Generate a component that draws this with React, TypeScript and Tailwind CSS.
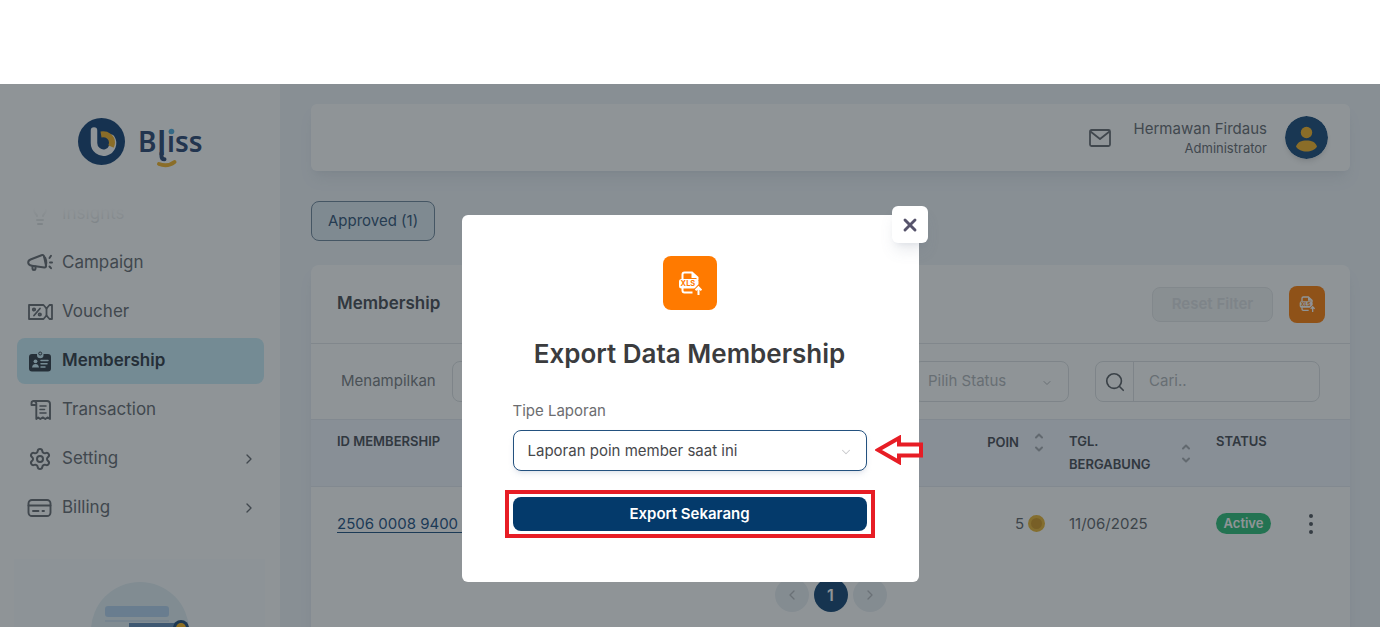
import React from "react";
import { ChevronDown, ChevronLeft, ChevronRight, ChevronUp, Lightbulb, Search, Settings, X } from "lucide-react";

type IconProps = { className?: string };

function CampaignIcon({ className }: IconProps) {
    return (
        <svg className={className} viewBox="0 0 26 24" fill="none" stroke="currentColor" strokeWidth="2" strokeLinecap="round" strokeLinejoin="round">
            <path d="M3.5 8.5 14.500 4.200c1.300-.5 2.200 0 2.500 1.200L19 14.500c.2 1.300-.5 2.100-1.700 1.900L5 14.800C2.500 14.500 1.200 13.500 1.200 11.600c0-1.600.8-2.500 2.300-3.100Z" />
            <path d="M17 5.500c2 1.500 3 6 1.800 9.500" />
            <path d="M5.500 15v2.700c0 1.600 3 1.600 3 0v-2.300" />
            <path d="m22.500 7 1.500-2.200M23 11.500h2M22.500 15.500l1.500 1.700" />
        </svg>
    );
}

function VoucherIcon({ className }: IconProps) {
    return (
        <svg className={className} viewBox="0 0 26 24" fill="none" stroke="currentColor" strokeWidth="1.8" strokeLinecap="round" strokeLinejoin="round">
            <path d="M2 5h14.500l3 3.500L22.500 5H25v14h-2.500l-3-3.500-3 3.500H2Z" />
            <path d="M19.500 8.500v7" />
            <path d="m7 15.500 6-7" />
            <circle cx="7" cy="9.500" r="1.200" />
            <circle cx="12.800" cy="14.500" r="1.200" />
        </svg>
    );
}

function MembershipIcon({ className }: IconProps) {
    return (
        <svg className={className} viewBox="0 0 26 24" fill="none">
            <path d="M10 5H5a3 3 0 0 0-3 3v11.500a3 3 0 0 0 3 3h16a3 3 0 0 0 3-3V8a3 3 0 0 0-3-3h-4.500v1a3.200 3.200 0 0 1-6.500 0Z" fill="currentColor" />
            <circle cx="13.200" cy="4.500" r="1.500" stroke="currentColor" strokeWidth="1" />
            <circle cx="8.500" cy="12.300" r="1.900" fill="#cdeffa" />
            <path d="M5 18.500c.3-2.600 1.700-3.600 3.500-3.600s3.200 1 3.500 3.600Z" fill="#cdeffa" />
            <path d="M14 11.500h7M14 14.700h6M14 18h4" stroke="#cdeffa" strokeWidth="1.500" strokeLinecap="round" />
        </svg>
    );
}

function TransactionIcon({ className }: IconProps) {
    return (
        <svg className={className} viewBox="0 0 26 24" fill="none" stroke="currentColor" strokeWidth="1.900" strokeLinecap="round" strokeLinejoin="round">
            <path d="M6 3h14a3 3 0 0 1 3 3v15l-2.500-1.600L18.300 21l-2.500-1.600L13.300 21l-2.100-1.600L9.300 21V5.500C9.300 4 8 3 6.700 3S4.500 4 4.500 5.200V7h4.800" />
            <path d="M13 8h6M13 11.500h4.500M13 15h6" strokeWidth="1.600" />
        </svg>
    );
}

function SettingIcon({ className }: IconProps) {
    return <Settings className={className} strokeWidth={2} />;
}

function BillingIcon({ className }: IconProps) {
    return (
        <svg className={className} viewBox="0 0 26 24" fill="none" stroke="currentColor" strokeWidth="1.900" strokeLinecap="round">
            <rect x="1.500" y="4" width="22" height="16" rx="3.500" />
            <path d="M1.500 9.500h22M6 15h5.500M15.500 15h1.500" />
        </svg>
    );
}

function InsightIcon({ className }: IconProps) {
    return <Lightbulb className={className} strokeWidth={2} />;
}

function MailIcon({ className }: IconProps) {
    return (
        <svg className={className} viewBox="0 0 24 24" fill="none" stroke="currentColor" strokeWidth="1.800" strokeLinejoin="round">
            <rect x="2" y="4" width="20" height="16" rx="1.500" />
            <path d="m2.500 5.500 9.500 7.500 9.500-7.500" />
        </svg>
    );
}

function XlsIcon({ className }: IconProps) {
    return (
        <svg className={className} viewBox="0 0 24 24" fill="none">
            <path d="M4.500 8V3.500A2 2 0 0 1 6.500 1.500H14l5.500 5V9" stroke="white" strokeWidth="2" />
            <path d="M13.500 1.500V7H20Z" fill="white" />
            <rect x="1" y="8" width="19.500" height="9.500" rx="2.500" fill="white" />
            <text x="2.600" y="15.400" fontSize="7.500" fontWeight="700" fontFamily="Inter, sans-serif" fill="#ff7a00">XLS</text>
            <path d="M4.500 17v2.500a2 2 0 0 0 2 2h8" stroke="white" strokeWidth="2" />
            <path d="M20.500 24v-6.500M17.500 19.300l3-3.100 3 3.100" stroke="#ff7a00" strokeWidth="4" />
            <path d="M20.500 24v-6.500M17.500 19.300l3-3.100 3 3.100" stroke="white" strokeWidth="2" />
        </svg>
    );
}

function Logo() {
    return (
        <svg className="h-[52px] w-[130px]" viewBox="0 0 130 52">
            <circle cx="23.500" cy="23.500" r="23.500" fill="#0d3a70" />
            <path d="M16 12.500V25a9.500 9.500 0 1 0 17.500-5" fill="none" stroke="white" strokeWidth="6.500" strokeLinecap="round" />
            <path d="M23 16.500c6-1 11 2.500 11 8 0 1.500-.4 2.800-1 4" fill="none" stroke="#f5b120" strokeWidth="6" />
            <text fontFamily="'Noto Sans', sans-serif" fontWeight="600" fontSize="28" fill="#24406f">
                <tspan x="60" y="34">B</tspan>
                <tspan x="79" y="37" fontSize="33">l</tspan>
                <tspan x="89" y="34">iss</tspan>
            </text>
            <path d="M83.500 35v3c0 2.200 1 3.300 3 3.300" fill="none" stroke="#24406f" strokeWidth="4" strokeLinecap="round" />
            <circle cx="93.500" cy="13.500" r="2.800" fill="#4aa8dc" />
            <path d="M81 46c5 2 11 1.500 15.500-2" fill="none" stroke="#f5b120" strokeWidth="4" strokeLinecap="round" />
        </svg>
    );
}

const menu = [
    { id: 1, label: "Insights", Icon: InsightIcon },
    { id: 2, label: "Campaign", Icon: CampaignIcon },
    { id: 3, label: "Voucher", Icon: VoucherIcon },
    { id: 4, label: "Membership", Icon: MembershipIcon, active: true },
    { id: 5, label: "Transaction", Icon: TransactionIcon },
    { id: 6, label: "Setting", Icon: SettingIcon, nested: true },
    { id: 7, label: "Billing", Icon: BillingIcon, nested: true },
];

function Sidebar() {
    return (
        <aside className="w-[280px] shrink-0 overflow-hidden bg-white pt-[34px]">
            <div className="pl-[78px]">
                <Logo />
            </div>
            <nav className="relative mt-[21px] flex flex-col gap-[3px] pl-[17px] pr-4">
                {menu.map(({ id, label, Icon, active, nested }) => (
                    <a
                        key={id}
                        href="#"
                        className={`flex h-[46px] items-center rounded-lg pl-[10px] pr-[7px] text-[17px] ${
                            active ? "bg-[#c9ecf8] font-semibold text-[#2a3440]" : "text-[#62666d]"
                        }`}
                    >
                        <Icon className="h-6 w-[26px]" />
                        <span className="ml-[9px] flex-1">{label}</span>
                        {nested && <ChevronRight className="size-4" />}
                    </a>
                ))}
                <div className="absolute inset-x-0 top-0 h-12 bg-linear-to-b from-white from-35% to-white/60" />
            </nav>
            <div className="ml-[14px] mr-[15px] mt-7 bg-[#fafdff] pt-[23px]">
                <svg className="mx-auto block h-[98px] w-[98px]" viewBox="0 0 98 98">
                    <circle cx="49" cy="49" r="49" fill="#e2eef4" />
                    <rect x="14" y="24" width="64" height="11" rx="3" fill="#b3d1ee" />
                    <rect x="14" y="38" width="64" height="2" fill="#cfe0f0" />
                    <rect x="38" y="41" width="50" height="40" fill="#5c86b4" />
                    <circle cx="90" cy="46" r="8" fill="#1b4675" />
                    <circle cx="90" cy="46" r="5" fill="#ffb413" />
                </svg>
            </div>
        </aside>
    );
}

function Topbar() {
    return (
        <header className="flex h-[67px] items-center justify-end rounded-md bg-white pr-[22px] shadow-lg shadow-slate-500/10">
            <MailIcon className="size-6 text-[#62666d]" />
            <div className="ml-[22px] text-right text-[#62666d]">
                <div className="text-[15px] leading-5">Hermawan Firdaus</div>
                <div className="text-[13px] leading-[18px]">Administrator</div>
            </div>
            <svg className="ml-[18px] size-[43px] rounded-full shadow-md" viewBox="0 0 43 43">
                <circle cx="21.500" cy="21.500" r="21.500" fill="#124577" />
                <circle cx="21.500" cy="16.500" r="5.700" fill="#f5b120" />
                <path d="M11 30.500c1.500-4.500 5.500-6 10.500-6s9 1.500 10.500 6c-2 3.500-6 5-10.500 5s-8.500-1.500-10.500-5Z" fill="#f5b120" />
            </svg>
        </header>
    );
}

function SortIcon() {
    return (
        <span className="flex flex-col gap-px text-[#a4a8ae]">
            <ChevronUp className="size-3" strokeWidth={4} />
            <ChevronDown className="size-3" strokeWidth={4} />
        </span>
    );
}

function Filters() {
    return (
        <div className="flex h-[76px] items-center border-t border-[#e2e5e8] px-[30px]">
            <label htmlFor="page-size" className="text-[15px] text-[#74787d]">
                Menampilkan
            </label>
            <select id="page-size" className="ml-4 h-[41px] w-20 appearance-none rounded-lg border border-[#dcdfe2]" />
            <div className="relative ml-auto">
                <select aria-label="Status" className="h-[41px] w-[156px] appearance-none rounded-lg border border-[#dcdfe2] px-[14px] text-[15px] text-[#afb3b7]">
                    <option>Pilih Status</option>
                </select>
                <ChevronDown className="pointer-events-none absolute right-4 top-4 size-3 text-[#afb3b7]" />
            </div>
            <div className="ml-[26px] flex h-[41px] w-[225px] items-center rounded-lg border border-[#dcdfe2]">
                <span className="flex h-full w-[38px] items-center justify-center border-r border-[#dcdfe2]">
                    <Search className="size-[22px] text-[#55595f]" strokeWidth={1.8} />
                </span>
                <input aria-label="Cari" placeholder="Cari.." className="min-w-0 flex-1 px-[15px] text-[15px] placeholder:text-[#afb3b7]" />
            </div>
        </div>
    );
}

function MembershipTable() {
    return (
        <table className="w-full table-fixed text-left text-[15px] text-[#5a5e65]">
            <colgroup>
                <col />
                <col className="w-[112px]" />
                <col className="w-[147px]" />
                <col className="w-[95px]" />
                <col className="w-[55px]" />
            </colgroup>
            <thead className="bg-[#f0f4fd] align-top text-[13px] leading-[23px] text-[#42464f]">
                <tr className="border-y border-[#e4e8f0]">
                    <th className="py-[10px] pl-[26px] font-semibold">ID MEMBERSHIP</th>
                    <th className="py-[10px] pr-2 font-semibold">
                        <div className="flex items-center justify-end gap-[14px]">
                            POIN <SortIcon />
                        </div>
                    </th>
                    <th className="py-[10px] pl-4 pr-2 font-semibold">
                        <div className="flex items-center justify-between">
                            <span>
                                TGL.
                                <br />
                                BERGABUNG
                            </span>
                            <SortIcon />
                        </div>
                    </th>
                    <th className="py-[10px] pl-4 font-semibold">STATUS</th>
                    <th />
                </tr>
            </thead>
            <tbody>
                <tr className="h-[74px]">
                    <td className="pl-[26px]">
                        <a href="#" className="whitespace-pre text-[#164a7d] underline underline-offset-3">
                            {"2506 0008 9400\u00a0\u00a0\u00a0\u00a0\u00a0"}
                        </a>
                    </td>
                    <td className="pr-2">
                        <div className="flex items-center justify-end gap-1">
                            5
                            <span className="size-[17px] rounded-full border-3 border-[#e8b32f] bg-[#d0951c]" />
                        </div>
                    </td>
                    <td className="pl-4">11/06/2025</td>
                    <td className="pl-4">
                        <span className="block w-[55px] rounded-full bg-[#27bd74] text-center text-[13px] font-semibold leading-[21px] text-white">Active</span>
                    </td>
                    <td>
                        <button aria-label="Menu" className="ml-[14px] flex flex-col gap-1">
                            <span className="size-1 rounded-full bg-[#4b5058]" />
                            <span className="size-1 rounded-full bg-[#4b5058]" />
                            <span className="size-1 rounded-full bg-[#4b5058]" />
                        </button>
                    </td>
                </tr>
            </tbody>
        </table>
    );
}

function Pagination() {
    return (
        <div className="mt-[17px] flex justify-center gap-[5px] pb-8">
            <button aria-label="Previous" className="flex size-[34px] items-center justify-center rounded-full bg-[#e9eef3] text-[#b4b8bd]">
                <ChevronLeft className="size-4" />
            </button>
            <button className="size-[34px] rounded-full bg-[#0c3f70] text-base font-semibold text-white">1</button>
            <button aria-label="Next" className="flex size-[34px] items-center justify-center rounded-full bg-[#e9eef3] text-[#b4b8bd]">
                <ChevronRight className="size-4" />
            </button>
        </div>
    );
}

function ExportDialog() {
    return (
        <div role="dialog" aria-labelledby="export-title" className="relative w-[457px] rounded-md bg-white pb-[51px] pl-[51px] pr-[52px] pt-[41px]">
            <button aria-label="Close" className="absolute -right-[9px] -top-[9px] flex h-[37px] w-9 items-center justify-center rounded-md bg-white text-[#56536b] shadow-lg shadow-slate-500/15">
                <X className="size-5" strokeWidth={3.5} />
            </button>
            <div className="mx-auto flex size-[54px] items-center justify-center rounded-lg bg-[#ff7a00]">
                <XlsIcon className="size-6" />
            </div>
            <h2 id="export-title" className="mt-7 whitespace-nowrap text-center text-[26px] font-semibold leading-8 text-[#3b3c3e]">
                Export Data Membership
            </h2>
            <label htmlFor="report-type" className="mt-[30px] block text-[15px] leading-[22px] text-[#6c6d70]">
                Tipe Laporan
            </label>
            <div className="relative mt-2">
                <select id="report-type" className="block h-[41px] w-full appearance-none rounded-lg border border-[#23517f] bg-white px-[14px] pt-px text-[15px] text-[#47484b] shadow-md shadow-slate-400/20">
                    <option>Laporan poin member saat ini</option>
                </select>
                <ChevronDown className="pointer-events-none absolute right-[14px] top-[15px] size-[14px] text-[#c8c9cc]" strokeWidth={1.8} />
                <svg className="absolute -right-[56px] top-[5px] h-[30px] w-12" viewBox="0 0 48 30">
                    <path d="M3 15 24 3v6.500h22v11H24V27Z" fill="white" stroke="#e71d25" strokeWidth="4" />
                </svg>
            </div>
            <div className="relative mt-[26px]">
                <button className="block h-[34px] w-full rounded-lg bg-[#043a6b] text-[15px] font-semibold text-white">Export Sekarang</button>
                <div className="pointer-events-none absolute -inset-x-2 -inset-y-[7px] border-4 border-[#e71d25]" />
            </div>
        </div>
    );
}

export default function App() {
    return (
        <div className="flex h-screen flex-col overflow-hidden bg-white pt-21 font-['Inter',sans-serif]">
            <div className="relative flex min-h-0 flex-1">
                <Sidebar />
                <main className="min-w-0 flex-1 overflow-hidden bg-[#f0f4f9] pl-[31px] pr-[30px] pt-5">
                    <Topbar />
                    <button className="mt-[30px] block h-10 rounded-lg border border-[#6b8298] bg-[#dfebf2] px-4 text-[15px] text-[#2c4f74]">
                        Approved (1)
                    </button>
                    <section className="mt-6 rounded-lg bg-white shadow-lg shadow-slate-500/10">
                        <div className="flex h-[78px] items-center pl-[26px] pr-[25px]">
                            <h1 className="flex-1 text-[17px] font-semibold text-[#42464f]">Membership</h1>
                            <button disabled className="h-[35px] w-[121px] rounded-lg border border-[#e4e6e8] bg-[#f3f4f5] text-[15px] font-semibold text-[#dcdfe2]">
                                Reset Filter
                            </button>
                            <button aria-label="Export" className="ml-4 flex h-[37px] w-9 items-center justify-center rounded-lg bg-[#ff7a00]">
                                <XlsIcon className="size-4" />
                            </button>
                        </div>
                        <Filters />
                        <MembershipTable />
                        <Pagination />
                    </section>
                </main>
                <div className="absolute inset-0 flex items-start justify-center bg-[#1f292f]/50 pt-[131px]">
                    <ExportDialog />
                </div>
            </div>
        </div>
    );
}
